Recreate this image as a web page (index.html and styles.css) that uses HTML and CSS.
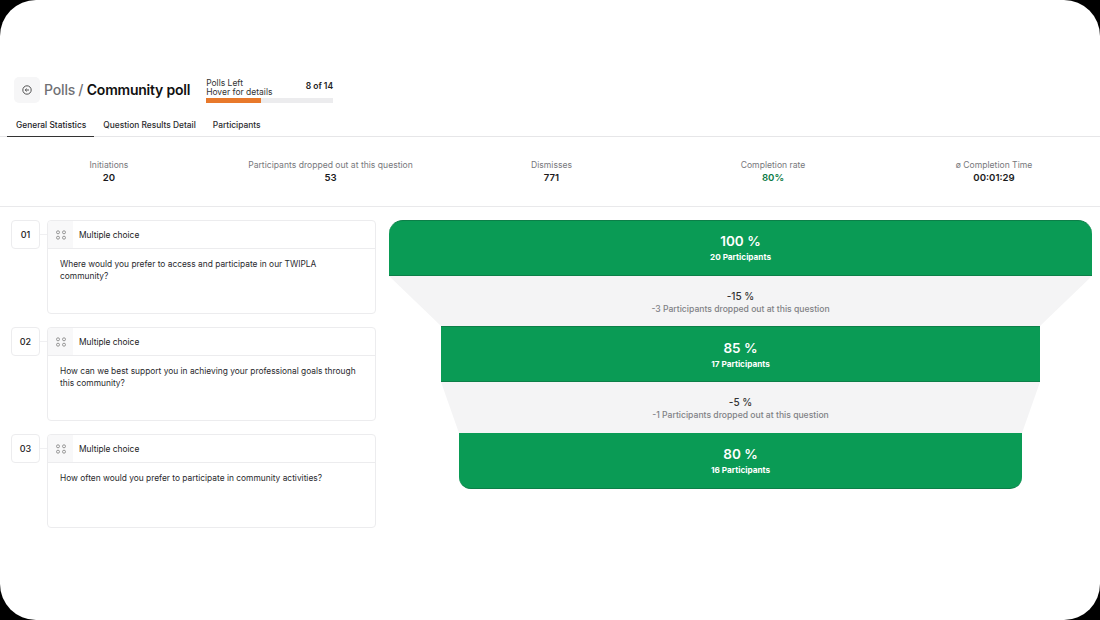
FILE: index.html
```html
<!DOCTYPE html>
<html lang="en">
<head>
<meta charset="utf-8">
<title>Community poll</title>
<link rel="stylesheet" href="styles.css">
</head>
<body>
<main class="app">
  <header class="head">
    <button class="back" aria-label="Back">
      <svg width="10" height="10" viewBox="0 0 10 10" fill="none" stroke="#444" stroke-width="0.9"><circle cx="5" cy="5" r="4.2"/><path d="M7 5H3.2M4.7 3.6 3.2 5l1.5 1.4"/></svg>
    </button>
    <h1 class="title"><span class="crumb">Polls /</span> <span class="page">Community poll</span></h1>
    <div class="quota">
      <div class="quota-row">
        <div class="quota-label">Polls Left<br>Hover for details</div>
        <div class="quota-count">8 of 14</div>
      </div>
      <div class="bar"><div class="bar-fill" style="width:43%"></div></div>
    </div>
  </header>
  <nav class="tabs">
    <a class="tab active">General Statistics</a>
    <a class="tab">Question Results Detail</a>
    <a class="tab">Participants</a>
  </nav>
  <section class="stats">
    <div class="stat"><div class="stat-label">Initiations</div><div class="stat-value">20</div></div>
    <div class="stat"><div class="stat-label">Participants dropped out at this question</div><div class="stat-value">53</div></div>
    <div class="stat"><div class="stat-label">Dismisses</div><div class="stat-value">771</div></div>
    <div class="stat"><div class="stat-label">Completion rate</div><div class="stat-value good">80%</div></div>
    <div class="stat"><div class="stat-label">ø Completion Time</div><div class="stat-value">00:01:29</div></div>
  </section>
  <section class="content">
    <div class="questions">
      <article class="q">
        <div class="num">01</div><div class="link"></div>
        <div class="card">
          <div class="card-head"><span class="type-icon"><svg width="10" height="10" viewBox="0 0 10 10" fill="none" stroke="#808080" stroke-width="0.8"><circle cx="2" cy="2.3" r="1.5"/><circle cx="8" cy="2.3" r="1.5"/><circle cx="2" cy="7.7" r="1.5"/><circle cx="8" cy="7.7" r="1.5"/></svg></span>Multiple choice</div>
          <p class="card-body">Where would you prefer to access and participate in our TWIPLA community?</p>
        </div>
      </article>
      <article class="q">
        <div class="num">02</div><div class="link"></div>
        <div class="card">
          <div class="card-head"><span class="type-icon"><svg width="10" height="10" viewBox="0 0 10 10" fill="none" stroke="#808080" stroke-width="0.8"><circle cx="2" cy="2.3" r="1.5"/><circle cx="8" cy="2.3" r="1.5"/><circle cx="2" cy="7.7" r="1.5"/><circle cx="8" cy="7.7" r="1.5"/></svg></span>Multiple choice</div>
          <p class="card-body">How can we best support you in achieving your professional goals through this community?</p>
        </div>
      </article>
      <article class="q">
        <div class="num">03</div><div class="link"></div>
        <div class="card">
          <div class="card-head"><span class="type-icon"><svg width="10" height="10" viewBox="0 0 10 10" fill="none" stroke="#808080" stroke-width="0.8"><circle cx="2" cy="2.3" r="1.5"/><circle cx="8" cy="2.3" r="1.5"/><circle cx="2" cy="7.7" r="1.5"/><circle cx="8" cy="7.7" r="1.5"/></svg></span>Multiple choice</div>
          <p class="card-body">How often would you prefer to participate in community activities?</p>
        </div>
      </article>
    </div>
    <div class="funnel">
      <div class="step step-1"><div class="pct">100 %</div><div class="cnt">20 Participants</div></div>
      <div class="drop drop-1"><div class="drop-shape"></div><div class="drop-pct">-15 %</div><div class="drop-txt">-3 Participants dropped out at this question</div></div>
      <div class="step step-2"><div class="pct">85 %</div><div class="cnt">17 Participants</div></div>
      <div class="drop drop-2"><div class="drop-shape"></div><div class="drop-pct">-5 %</div><div class="drop-txt">-1 Participants dropped out at this question</div></div>
      <div class="step step-3"><div class="pct">80 %</div><div class="cnt">16 Participants</div></div>
    </div>
  </section>
</main>
</body>
</html>
```
FILE: styles.css
```css
* { box-sizing: border-box; }
html, body { margin: 0; height: 100%; background: #000; }
body { width: 1100px; height: 620px; overflow: hidden; font-family: Inter, "Liberation Sans", sans-serif; }
.app { width: 1100px; height: 620px; background: #fff; border-radius: 36px; padding-top: 77px; color: #111; overflow: hidden; }

.head { display: flex; align-items: flex-start; padding-left: 14px; height: 31px; }
.back { width: 26px; height: 26px; padding: 0; border: 0; border-radius: 5px; background: #f6f6f7; display: flex; align-items: center; justify-content: center; }
.title { margin: 3px 0 0 4px; font-size: 14px; line-height: 20px; font-weight: 400; white-space: nowrap; word-spacing: -.5px; }
.crumb { color: #707175; font-weight: 500; letter-spacing: -.15px; }
.page { color: #111; font-weight: 600; letter-spacing: -.22px; word-spacing: 0; }
.quota { width: 127px; margin: 2px 0 0 16px; }
.quota-row { display: flex; justify-content: space-between; }
.quota-label { font-size: 8.5px; line-height: 8.5px; color: #333; }
.quota-count { font-size: 8.5px; line-height: 12px; font-weight: 600; color: #222; margin-top: 1px; }
.bar { height: 4.5px; margin-top: 2px; background: #ececee; }
.bar-fill { height: 100%; background: #e8792b; }

.tabs { display: flex; height: 29px; padding-left: 7px; border-bottom: 1px solid #e6e6e8; }
.tab { font-size: 8.4px; line-height: 30px; padding: 2px 8px 0 9px; font-weight: 500; color: #2a2a2e; white-space: nowrap; }
.tab.active { height: 29px; border-bottom: 1px solid #333; color: #1c1c1f; }

.stats { height: 70px; border-bottom: 1px solid #e9e9eb; display: grid; grid-template-columns: 218px 225px 217px 226px 216px; text-align: center; padding-top: 23px; }
.stat-label { font-size: 8.6px; line-height: 11px; color: #77787c; white-space: nowrap; }
.stat-value { font-size: 9.6px; line-height: 14px; font-weight: 600; color: #1a1a1c; }
.stat-value.good { color: #0a7a45; }

.content { display: flex; padding: 13px 8px 0 11px; gap: 13px; }
.questions { width: 365px; display: flex; flex-direction: column; gap: 13px; }
.q { display: flex; }
.num { width: 29px; height: 29px; flex: none; border: 1px solid #ececee; border-radius: 4px; font-size: 9px; font-weight: 500; color: #222; display: flex; align-items: center; justify-content: center; }
.link { width: 7px; height: 1px; margin-top: 14px; background: #f0f0f2; flex: none; }
.card { width: 329px; height: 94px; border: 1px solid #ececee; border-radius: 4px; }
.card-head { display: flex; align-items: center; height: 28px; border-bottom: 1px solid #ececee; font-size: 8.4px; color: #222; }
.type-icon { width: 25px; height: 27px; background: #f8f8f9; margin-right: 6px; display: flex; align-items: center; justify-content: center; border-radius: 4px 0 0 0; }
.card-body { margin: 9px 12px 0; font-size: 8.4px; line-height: 12px; color: #2a2a2e; }

.funnel { width: 703px; display: flex; flex-direction: column; align-items: center; }
.step { height: 56px; background: #0a9b55; border: 1px solid #0c7f48; border-width: 1px 0; color: #fff; text-align: center; display: flex; flex-direction: column; align-items: center; padding-top: 12px; }
.step-1 { width: 703px; border-radius: 14px 14px 0 0; }
.step-2 { width: 599px; padding-top: 13px; }
.step-3 { width: 563px; padding-top: 13px; border-radius: 0 0 12px 12px; border-top: 0; }
.pct { font-size: 13.5px; line-height: 17px; font-weight: 600; }
.cnt { font-size: 8.2px; line-height: 12px; font-weight: 700; margin-top: 1px; }
.drop { position: relative; height: 50px; text-align: center; padding-top: 14px; }
.drop-1 { width: 703px; }
.drop-2 { width: 599px; height: 51px; }
.drop-shape { position: absolute; inset: 0; background: #f4f4f5; }
.drop-1 .drop-shape { clip-path: polygon(0 0, 100% 0, 92.6% 100%, 7.4% 100%); }
.drop-2 .drop-shape { clip-path: polygon(0 0, 100% 0, 97% 100%, 3% 100%); }
.drop-pct, .drop-txt { position: relative; }
.drop-pct { font-size: 10px; line-height: 13px; font-weight: 500; color: #333; }
.drop-txt { font-size: 8.6px; line-height: 12px; font-weight: 500; color: #808185; }
```
